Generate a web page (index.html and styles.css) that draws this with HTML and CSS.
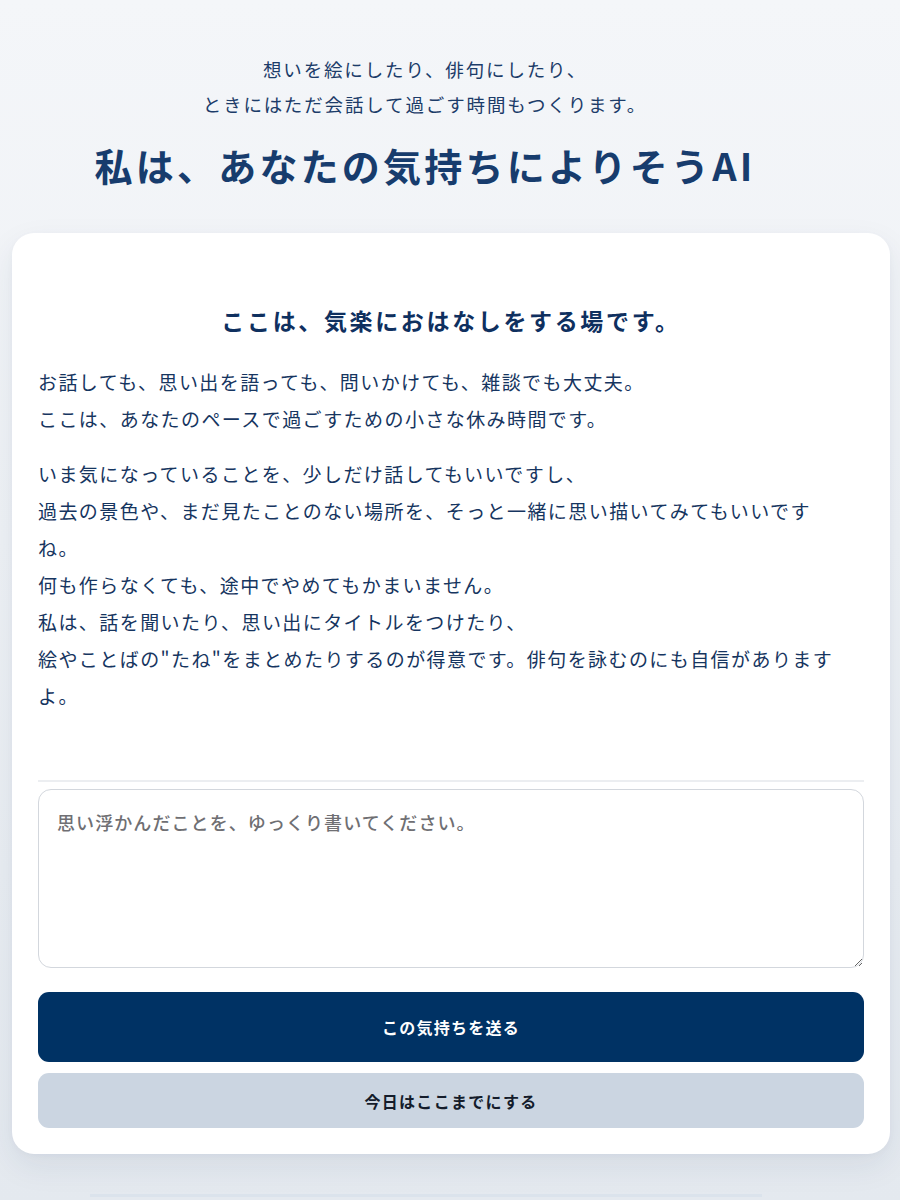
FILE: index.html
```html
<!DOCTYPE html>
<html lang="ja">
<head>
<meta charset="utf-8">
<title>よりそうAI</title>
<link rel="stylesheet" href="styles.css">
</head>
<body>
<div class="page">
  <header class="hero">
    <p class="hero-lead">想いを絵にしたり、俳句にしたり、<br>ときにはただ会話して過ごす時間もつくります。</p>
    <h1 class="hero-title">私は、あなたの気持ちによりそうAI</h1>
  </header>

  <main class="card">
    <h2 class="card-title">ここは、気楽におはなしをする場です。</h2>
    <div class="intro">
      <p>お話しても、思い出を語っても、問いかけても、雑談でも大丈夫。<br>ここは、あなたのペースで過ごすための小さな休み時間です。</p>
      <p>いま気になっていることを、少しだけ話してもいいですし、<br>過去の景色や、まだ見たことのない場所を、そっと一緒に思い描いてみてもいいですね。<br>何も作らなくても、途中でやめてもかまいません。<br>私は、話を聞いたり、思い出にタイトルをつけたり、<br>絵やことばの"たね"をまとめたりするのが得意です。俳句を詠むのにも自信がありますよ。</p>
    </div>

    <form class="composer">
      <textarea class="composer-input" placeholder="思い浮かんだことを、ゆっくり書いてください。"></textarea>
      <button type="button" class="btn btn-primary">この気持ちを送る</button>
      <button type="button" class="btn btn-secondary">今日はここまでにする</button>
    </form>
  </main>

  <footer class="foot"></footer>
</div>
</body>
</html>
```

FILE: styles.css
```css
* { box-sizing: border-box; }

html, body {
  margin: 0;
  padding: 0;
}

body {
  background: linear-gradient(180deg, #f4f6f9 0%, #eef1f5 45%, #e4e9ef 100%);
  font-family: "Noto Sans CJK JP", "Noto Sans", sans-serif;
  color: #1c3a66;
  min-height: 1200px;
}

.page {
  width: 900px;
  display: flex;
  flex-direction: column;
}

.hero {
  padding: 52px 50px 0 0;
  text-align: center;
}

.hero-lead {
  margin: 0;
  font-size: 18.5px;
  line-height: 35px;
  letter-spacing: 0.1em;
  font-weight: 400;
  color: #1c3c69;
}

.hero-title {
  margin: 17px 0 0;
  font-size: 38px;
  line-height: 52px;
  font-weight: 700;
  letter-spacing: 0.085em;
  color: #173c6d;
}

.card {
  margin: 42px 10px 0 12px;
  background: #ffffff;
  border-radius: 22px;
  padding: 26px 26px 26px;
  box-shadow: 0 12px 32px rgba(20, 45, 85, 0.08), 0 2px 6px rgba(20, 45, 85, 0.03);
}

.card-title {
  margin: 45px 0 0;
  text-align: center;
  font-size: 23px;
  line-height: 32px;
  font-weight: 700;
  letter-spacing: 0.115em;
  color: #0f305f;
}

.intro {
  margin-top: 27px;
  max-width: 808px;
}

.intro p {
  margin: 0 0 18px;
  font-size: 19px;
  line-height: 37px;
  letter-spacing: 0.075em;
  font-weight: 400;
  color: #163560;
}

.intro p:last-child { margin-bottom: 0; }

.composer {
  margin-top: 66px;
  border-top: 2px solid #eceef1;
  padding-top: 7px;
  display: flex;
  flex-direction: column;
}

.composer-input {
  height: 179px;
  width: 100%;
  resize: vertical;
  border: 1.5px solid #d3d7dd;
  border-radius: 13px;
  padding: 19px 18px;
  font-family: "Noto Sans CJK JP", "Noto Sans", sans-serif;
  font-size: 18px;
  line-height: 26px;
  letter-spacing: 0.06em;
  color: #1c3a66;
  background: #fff;
  outline: none;
}

.composer-input::placeholder {
  color: #6f6f73;
  font-weight: 500;
}

.btn {
  width: 100%;
  border: none;
  border-radius: 11px;
  font-family: "Noto Sans CJK JP", "Noto Sans", sans-serif;
  font-size: 16px;
  font-weight: 700;
  letter-spacing: 0.08em;
  cursor: pointer;
}

.btn-primary {
  margin-top: 24px;
  height: 70px;
  background: #003264;
  color: #ffffff;
}

.btn-secondary {
  margin-top: 11px;
  height: 55px;
  background: #cbd5e1;
  color: #141c2b;
}

.foot {
  margin: 40px 138px 0 90px;
  border-top: 3px solid #dbe3ec;
  height: 3px;
}
```
